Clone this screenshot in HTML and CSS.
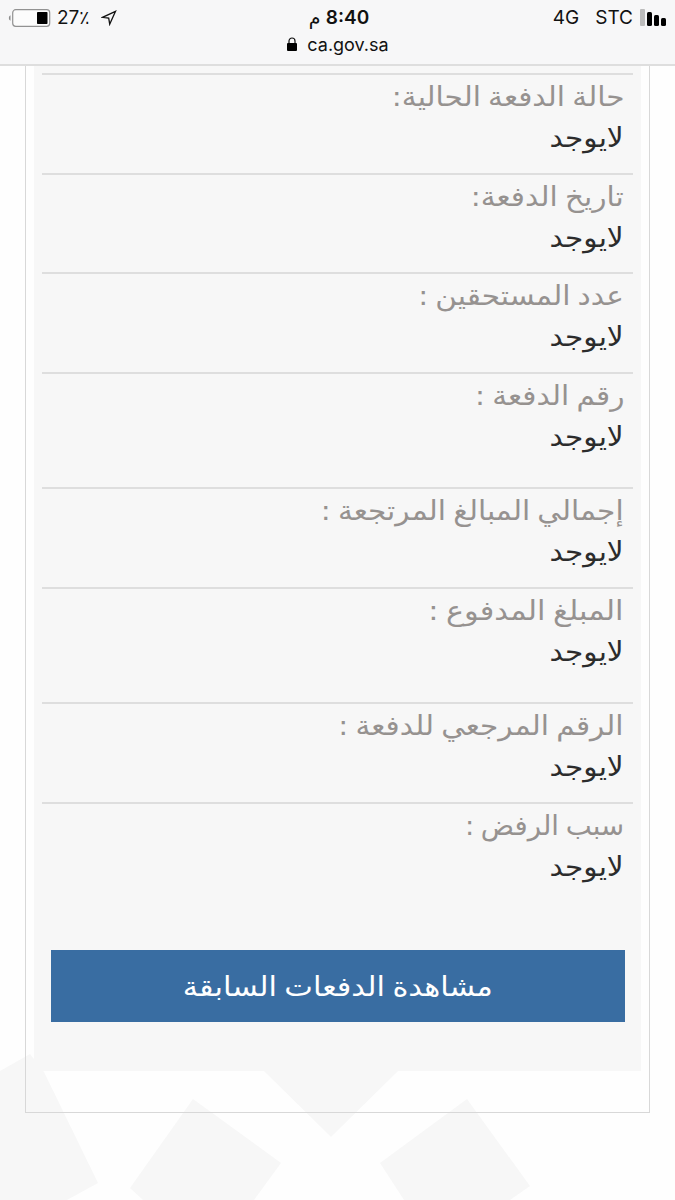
FILE: index.html
```html
<!DOCTYPE html>
<html lang="ar" dir="rtl">
<head>
    <meta charset="UTF-8">
    <meta name="viewport" content="width=device-width, initial-scale=1.0">
    <title>ca.gov.sa</title>
    <link rel="stylesheet" href="styles.css">
</head>
<body>
<header class="browser-bar" dir="ltr">
    <div class="status">
        <div class="status-left">
            <svg class="battery" width="44" height="20" viewBox="0 0 44 20">
                <path d="M2.5 7.2Q.8 7.7.8 10t1.7 2.8z" fill="#8d8d8d"/>
                <rect x="4.7" y="1.7" width="37" height="16.6" rx="3" fill="#fcfcfc" stroke="#929292" stroke-width="1.2"/>
                <rect x="29" y="4" width="10.5" height="12" rx=".8" fill="#000"/>
            </svg>
            <span class="percent">27<span class="sign">٪</span></span>
            <svg class="location" width="16" height="16" viewBox="0 0 16 16">
                <path d="M14.5 1.3 1.5 7.3l6.2.9 1 6z" fill="none" stroke="#111" stroke-width="1.3"/>
            </svg>
        </div>
        <div class="time" dir="rtl"><b>8:40</b> <span>م</span></div>
        <div class="status-right">
            <span class="network">4G</span>
            <span class="carrier">STC</span>
            <svg width="28" height="18" viewBox="0 0 28 18">
                <rect x="1" y="0" width="5" height="17" rx="1" fill="#bcbcbc"/>
                <rect x="8" y="3" width="5" height="14" rx="1.5"/>
                <rect x="15" y="6" width="5" height="11" rx="1.5"/>
                <rect x="22" y="9" width="5" height="8" rx="1.5"/>
            </svg>
        </div>
    </div>
    <div class="address">
        <svg width="12" height="15" viewBox="0 0 12 15">
            <path d="M3 7V4a3 3 0 0 1 6 0v3" fill="none" stroke="#111" stroke-width="1.2"/>
            <rect x="1" y="6" width="10" height="8" rx="1" fill="#000"/>
        </svg>
        <span>ca.gov.sa</span>
    </div>
</header>

<main class="page">
    <svg class="pattern" width="675" height="150" viewBox="0 0 675 150">
        <path d="M0 21 30 4 44 22 98 133 67 150H0zM264 21H398L331 87zM193 49 281 113 254 150H143L130 138zM467 49 380 113 404 150H510L530 136z" fill="#f7f7f7"/>
    </svg>
    <div class="frame">
        <section class="card">
            <dl class="details">
                <div class="row"><dt><span>حالة الدفعة الحالية:</span></dt><dd><span>لايوجد</span></dd></div>
                <div class="row"><dt><span>تاريخ الدفعة:</span></dt><dd><span>لايوجد</span></dd></div>
                <div class="row"><dt><span>عدد المستحقين :</span></dt><dd><span>لايوجد</span></dd></div>
                <div class="row tall"><dt><span>رقم الدفعة :</span></dt><dd><span>لايوجد</span></dd></div>
                <div class="row"><dt><span>إجمالي المبالغ المرتجعة :</span></dt><dd><span>لايوجد</span></dd></div>
                <div class="row tall wide"><dt><span>المبلغ المدفوع :</span></dt><dd><span>لايوجد</span></dd></div>
                <div class="row"><dt><span>الرقم المرجعي للدفعة :</span></dt><dd><span>لايوجد</span></dd></div>
                <div class="row narrow"><dt><span>سبب الرفض :</span></dt><dd><span>لايوجد</span></dd></div>
            </dl>
            <button class="btn"><span>مشاهدة الدفعات السابقة</span></button>
        </section>
    </div>
</main>
</body>
</html>
```
FILE: styles.css
```css
* {
    margin: 0;
    padding: 0;
    box-sizing: border-box;
}

body {
    width: 675px;
    height: 1200px;
    overflow: hidden;
    background-color: #fefefe;
    font-family: 'DejaVu Sans', sans-serif;
}

.browser-bar {
    height: 66px;
    padding-top: 6px;
    background-color: #f7f7f8;
    border-bottom: 2px solid #dedede;
    font-family: Inter, 'DejaVu Sans', sans-serif;
    color: #111;
}

.status {
    display: grid;
    grid-template-columns: 1fr auto 1fr;
    align-items: center;
    height: 21px;
    padding: 0 8px;
    font-size: 19px;
}

.status-left,
.status-right {
    display: flex;
    align-items: center;
}

.status-right {
    justify-content: flex-end;
}

.percent {
    margin: 0 11px 0 5px;
}

.time {
    line-height: 20px;
    padding-left: 3px;
}

.time b {
    font-weight: 600;
}

.carrier {
    margin: 0 6px 0 16px;
}

.address {
    display: flex;
    align-items: center;
    justify-content: center;
    gap: 9px;
    height: 34px;
    font-size: 18px;
}

.page {
    position: relative;
    height: 1134px;
}

.pattern {
    position: absolute;
    left: 0;
    bottom: 0;
}

.frame {
    position: relative;
    width: 625px;
    height: 1047px;
    margin-right: 25px;
    padding: 0 8px;
    border: solid #d8d8d8;
    border-width: 0 1px 1px;
}

.card {
    height: 1005px;
    padding: 7px 8px;
    background-color: #f7f7f7;
}

.row {
    height: 99.5px;
    padding: 1px 9px 0 0;
    border-top: 2px solid #dedede;
}

.row.tall {
    height: 115.5px;
}

.row dt,
.row dd {
    height: 41px;
    line-height: 41px;
    font-size: 27px;
    white-space: nowrap;
}

.row span,
.btn span {
    display: inline-block;
    word-spacing: -2px;
}

.row span {
    transform: scaleX(1.095);
    transform-origin: right;
}

.row dt {
    color: #969290;
}

.row dd {
    color: #2c2c2c;
}

.row.wide dt span {
    transform: scaleX(1.125);
}

.row.narrow dt span {
    transform: scaleX(1.02);
}

.btn {
    display: block;
    width: 574px;
    height: 72px;
    margin: 49px 8px 0;
    border: none;
    background-color: #396da2;
    color: #fff;
    font-family: inherit;
    font-size: 27px;
}

.btn span {
    transform: scaleX(1.125);
}
```
